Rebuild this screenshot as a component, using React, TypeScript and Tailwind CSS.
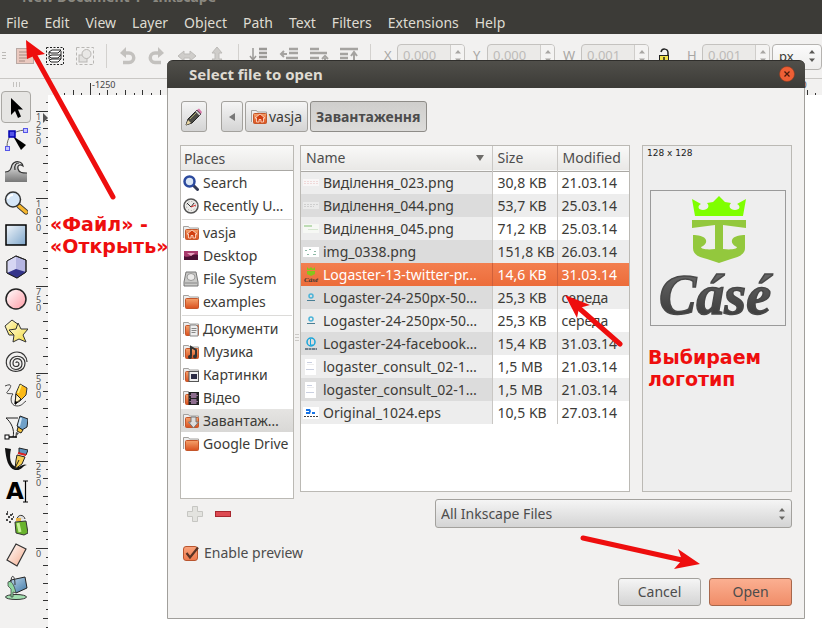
import React from "react";

const UI = "font-['Noto_Sans','Open_Sans',sans-serif]";

const menus = ["File", "Edit", "View", "Layer", "Object", "Path", "Text", "Filters", "Extensions", "Help"];

/* ---------- toolbar ---------- */

const barIcons: Record<string, React.ReactNode> = {
  selectAll: (
    <g>
      <rect x="1.500" y="2.500" width="17" height="15" fill="#eac9bf" stroke="#b9a9a4" />
      <path d="M4 6h9M4 9h11M4 12h9M4 15h6" stroke="#a58a82" />
    </g>
  ),
  layers: (
    <g fill="none" stroke="#222">
      <rect x="1.500" y="1.500" width="17" height="17" strokeDasharray="2 1.500" />
      <path d="M4 6l3-2h9l-3 3H6zM4 10l3-1h9l-3 3H6zM4 14l3-1h9l-3 3H6zM4 6v3M4 10v3M16 5v8" fill="#fff" />
    </g>
  ),
  deselect: (
    <g fill="none" stroke="#b9b7b4">
      <rect x="1.500" y="1.500" width="17" height="17" strokeDasharray="3 2" />
      <rect x="4" y="9" width="8" height="7" fill="#e2e1df" />
      <circle cx="11.500" cy="8" r="4.500" fill="#e9e8e6" />
    </g>
  ),
  undo: (
    <g>
      <path d="M7 7h5a4 4 0 0 1 0 9.500H6" fill="none" stroke="#c3c1be" strokeWidth="3.500" />
      <path d="M9 1v11L3 7z" fill="#c3c1be" />
    </g>
  ),
  redo: (
    <g>
      <path d="M13 7H8a4 4 0 0 0 0 9.500h6" fill="none" stroke="#c3c1be" strokeWidth="3.500" />
      <path d="M11 1v11l6-5z" fill="#c3c1be" />
    </g>
  ),
  flipH: <path d="M1 10l6-5v3h6V5l6 5-6 5v-3H7v3z" fill="#cfcdca" stroke="#bdbbb8" />,
  flipV: <path d="M10 1l5 6h-3v6h3l-5 6-5-6h3V7H5z" fill="#cfcdca" stroke="#bdbbb8" />,
  bottom: (
    <g fill="none" stroke="#9b9996" strokeWidth="1.500">
      <path d="M4 2v11M1 10l3 4 3-4" />
      <path d="M10 3h8M10 7h8M10 11h8M10 15h8" strokeWidth="2.500" />
    </g>
  ),
  lower: (
    <g fill="none" stroke="#a5a3a0" strokeWidth="2">
      <path d="M10 3h9M10 7h9M7 12h12M1 16h18" strokeWidth="2.500" />
      <path d="M8 8H2M5 5L2 8l3 3" />
    </g>
  ),
  raise: (
    <g fill="none" stroke="#a5a3a0" strokeWidth="2">
      <path d="M1 3h9M1 12h9M1 16h9" strokeWidth="2.500" />
      <path d="M1 7h17" strokeWidth="2.500" />
      <path d="M16 17v-5M13 13l3-3 3 3" />
    </g>
  ),
  top: (
    <g fill="none" stroke="#a5a3a0" strokeWidth="2">
      <path d="M1 3h18" strokeWidth="2.500" />
      <path d="M1 8h8M1 12h8M1 16h8" strokeWidth="2.500" />
      <path d="M15 17V7M12 10l3-4 3 4" />
    </g>
  ),
  lock: (
    <g stroke="#222">
      <rect x="5.500" y="9.500" width="9" height="8" fill="#f0e04a" />
      <path d="M7 6c1-4 7-4 7 1v3" fill="none" strokeWidth="1.500" />
      <path d="M10 11v4" strokeWidth="1.500" />
    </g>
  ),
};

function BarButton({ icon, label }: { icon: string; label: string }) {
  return (
    <button aria-label={label} className="flex h-7 w-[30px] shrink-0 items-center justify-center">
      <svg viewBox="0 0 20 20" className="size-5">{barIcons[icon]}</svg>
    </button>
  );
}

function BarDivider() {
  return (
    <div className="flex w-3 shrink-0 justify-center">
      <div className="h-6 w-px bg-[#d3d1ce]" />
    </div>
  );
}

function UpDown({ color }: { color: string }) {
  return (
    <svg viewBox="0 0 8 14" className="h-3.5 w-2" fill={color}>
      <path d="M1 4.500L4 1l3 3.500zM1 9.500L4 13l3-3.500z" />
    </svg>
  );
}

function Spin({ label, value, pad }: { label: string; value: string; pad: string }) {
  return (
    <label className="flex shrink-0 items-center text-[13px] text-[#a9a7a4]">
      <span className={pad}>{label}</span>
      <span className="flex h-6 w-[68px] overflow-hidden rounded-[4px] border border-[#c4c2bf] bg-[#ebeae8]">
        <input defaultValue={value} className="w-[52px] bg-transparent pl-[5px] text-[13px] text-[#bdbbb8] outline-none" />
        <span className="flex w-4 items-center justify-center border-l border-[#cfcdca] bg-[#f4f3f2]">
          <UpDown color="#a8a6a3" />
        </span>
      </span>
    </label>
  );
}

function Toolbar() {
  return (
    <div className="flex h-[45px] shrink-0 items-center overflow-hidden border-b border-[#c9c7c4] bg-[#f2f1f0]">
      <svg viewBox="0 0 10 20" className="h-5 w-2.5 shrink-0" stroke="#bbb9b6">
        <path d="M2 6.500h4M2 9.500h4M2 12.500h4" />
      </svg>
      <BarButton icon="selectAll" label="Select all" />
      <BarButton icon="layers" label="Select in all layers" />
      <BarButton icon="deselect" label="Deselect" />
      <BarDivider />
      <BarButton icon="undo" label="Rotate left" />
      <BarButton icon="redo" label="Rotate right" />
      <BarButton icon="flipH" label="Flip horizontal" />
      <BarButton icon="flipV" label="Flip vertical" />
      <BarDivider />
      <BarButton icon="bottom" label="Lower to bottom" />
      <BarButton icon="lower" label="Lower" />
      <BarButton icon="raise" label="Raise" />
      <BarButton icon="top" label="Raise to top" />
      <BarDivider />
      <Spin label="X" value="0.000" pad="w-[21px] pl-2" />
      <Spin label="Y" value="0.000" pad="w-[22px] pl-2" />
      <Spin label="W" value="0.001" pad="w-[26px] pl-2" />
      <BarButton icon="lock" label="Lock ratio" />
      <Spin label="H" value="0.001" pad="w-[23px] pl-2" />
      <div className="relative ml-0.5 h-[26px] w-[50px] shrink-0">
        <select aria-label="Units" className="size-full appearance-none rounded-[4px] border border-[#b5b3b0] bg-linear-to-b from-[#fbfbfb] to-[#eeedec] pl-1.5 text-[13px] text-[#3c3b37]">
          <option>px</option>
        </select>
        <span className="pointer-events-none absolute top-1.5 right-1.5">
          <UpDown color="#5a5956" />
        </span>
      </div>
    </div>
  );
}

/* ---------- toolbox ---------- */

const tools: [string, React.ReactNode][] = [
  ["Select", <path d="M7 3v17l4-4 3 7 3-1.500-3-7h5z" fill="#000" />],
  ["Edit nodes", (
    <g>
      <path d="M3 20C3 10 8 4 21 3" fill="none" stroke="#666" />
      <path d="M9 9l13 9-5 5z" fill="#000" />
      <rect x="5" y="4" width="6" height="6" fill="#5555e8" stroke="#0000b0" strokeWidth="1.500" />
      <rect x="19.500" y="1.500" width="4" height="4" fill="#c4c4ff" stroke="#5555e8" />
      <rect x="1.500" y="19.500" width="4" height="4" fill="#c4c4ff" stroke="#5555e8" />
    </g>
  )],
  ["Tweak", (
    <g>
      <path d="M1 23V13c5 0 6-3 7-7 3-5 10-4 11 1-3-2-6-1-5 3 1 4 5 4 9 4v9z" fill="url(#gGray)" />
      <path d="M1 13c5 0 6-3 7-7 3-5 10-4 11 1-3-2-6-1-5 3 1 4 5 4 9 4M11 11c-1-5 1-7 4-7" fill="none" stroke="#333" strokeWidth="1.200" />
    </g>
  )],
  ["Zoom", (
    <g>
      <path d="M15 15l7 6" stroke="#333" strokeWidth="5" strokeLinecap="round" />
      <path d="M15 15l7 6" stroke="#f5b62e" strokeWidth="3.500" strokeLinecap="round" />
      <circle cx="9" cy="8.500" r="7.500" fill="#d5e6f7" stroke="#333" strokeWidth="1.500" />
      <path d="M4 8a5 5 0 0 1 5-4" fill="none" stroke="#fff" strokeWidth="2" />
    </g>
  )],
  ["Rectangle", <rect x="2" y="2" width="20" height="20" fill="url(#gBlue)" stroke="#000" strokeWidth="1.500" />],
  ["3D box", (
    <g stroke="#222">
      <path d="M12 1l10 4v12l-9 6-10-5V6z" fill="#b6b6e2" />
      <path d="M12 1v13l-9 4V6z" fill="#d6d6f3" stroke="none" />
      <path d="M12 14l10 3-9 6-10-5z" fill="#34348a" stroke="none" />
      <path d="M12 1l10 4v12l-9 6-10-5V6z" fill="none" />
    </g>
  )],
  ["Ellipse", <circle cx="12" cy="12" r="10" fill="url(#gPink)" stroke="#222" strokeWidth="1.500" />],
  ["Star", (
    <g fill="url(#gYellow)" stroke="#333">
      <path d="M8 1l7 5-3 10H5L1 7z" />
      <path d="M14 4l3 6 7 0-5 6 3 7-7-3-6 3 1-7-5-5 7-1z" />
    </g>
  )],
  ["Spiral", <path d="M12 12c0-2 3-1 3 1 0 3-6 4-6-1 0-6 9-6 9 1 0 7-12 8-12-1C6 3 21 3 21 12c0 10-14 11-18 3C0 7 7 1 13 1c6 0 10 5 10 10" fill="none" stroke="#333" strokeWidth="1.200" />],
  ["Pencil", (
    <g>
      <path d="M1 3c7-3 7 0 3 5-4 4 3 2 5 3-3 3-3 12 4 12 5 0 6-3 9-5" fill="none" stroke="#444" />
      <path d="M16 1l7 4-1 7-6 6-5 3 1-11z" fill="#fbb917" stroke="#333" />
      <path d="M12 11l5 5-6 5z" fill="#fff3c4" stroke="#222" />
      <path d="M17 2l-3 8" stroke="#fff07a" strokeWidth="2" />
      <path d="M11 18l3 1-3 3z" />
    </g>
  )],
  ["Bezier", (
    <g>
      <path d="M2 3h12M2 3c5 4 9 12 7 19" fill="none" stroke="#222" />
      <path d="M16 1l8 3-1 8-5 3-5-4z" fill="#6fa0c8" stroke="#222" />
      <path d="M17 3l-2 8" stroke="#d3e6f5" strokeWidth="2" />
      <path d="M14 12l5 3-2 3-4-2z" fill="#f2c23c" stroke="#222" />
      <path d="M12 17l3 1-4 5z" fill="#555" />
      <path d="M4 22h9" stroke="#000" strokeWidth="1.500" />
      <rect x="1" y="20" width="4" height="4" fill="#fff" stroke="#000" />
    </g>
  )],
  ["Calligraphy", (
    <g>
      <path d="M1 1l6 1c-2 8-1 17 6 18 4 0 6-4 10-2-4 0-5 6-12 5C4 21 2 12 1 1z" fill="#111" />
      <path d="M15 1l9 2-2 5-7-2z" fill="#5e93bd" stroke="#222" />
      <path d="M14 6l8 2" stroke="#d22" strokeWidth="2" />
      <path d="M13 8l8 2-3 7-7 5 1-9z" fill="#f6cf52" stroke="#222" />
      <path d="M11 21l4-8" stroke="#222" />
    </g>
  )],
  ["Text", (
    <g>
      <path d="M21.500 2v21M19 2h5M19 23h5" stroke="#000" strokeWidth="1.200" />
      <text x="2" y="20" fontSize="23" fontWeight="700" fontFamily="DejaVu Sans, sans-serif">A</text>
    </g>
  )],
  ["Spray", (
    <g>
      <path d="M11 11l11-1 2 12-4 2-8-2z" fill="#69b32d" stroke="#333" />
      <path d="M14 12l2 9" stroke="#c8f29a" strokeWidth="3" />
      <path d="M13 9c0-6 7-6 8-1" fill="#ddd" stroke="#333" />
      <path d="M12 7h5v3h-5z" fill="#eab344" />
      <path d="M2 3h2M4 6h2M2 9h2M6 4h2M7 8h2M9 6h1M5 11h2M3 1h1M8 3h1" stroke="#111" strokeWidth="1.500" />
    </g>
  )],
  ["Eraser", <path d="M12 1l10 5-9 17-10-6z" fill="url(#gPeach)" stroke="#333" strokeWidth="1.200" />],
  ["Paint bucket", (
    <g>
      <ellipse cx="12" cy="22" rx="10.500" ry="2.500" fill="#a2dfb0" stroke="#333" />
      <path d="M7 5l14-3 2 11-11 5-8-10z" fill="url(#gSteel)" stroke="#222" />
      <path d="M4 7c3-2 6 2 8 11l-3-1v5H7v-8L4 11z" fill="#8fd6a0" stroke="#333" strokeWidth=".7" />
      <path d="M7 7C7-1 11-1 11 10" fill="none" stroke="#333" />
    </g>
  )],
];

function Gradients() {
  return (
    <defs>
      <linearGradient id="gGray" x2="0" y2="1"><stop stopColor="#eee" /><stop offset="1" stopColor="#777" /></linearGradient>
      <linearGradient id="gBlue" x2="1" y2="1"><stop stopColor="#f1f6fb" /><stop offset="1" stopColor="#7ea6cb" /></linearGradient>
      <linearGradient id="gSteel" x2="1" y2="1"><stop stopColor="#c5dcee" /><stop offset="1" stopColor="#3f78a6" /></linearGradient>
      <linearGradient id="gPink" x2="1" y2="1"><stop stopColor="#fff" /><stop offset="1" stopColor="#ff9ba5" /></linearGradient>
      <linearGradient id="gYellow" x2="1" y2="1"><stop stopColor="#fffde0" /><stop offset="1" stopColor="#f3d93c" /></linearGradient>
      <linearGradient id="gPeach" x2="1" y2="1"><stop stopColor="#fff" /><stop offset="1" stopColor="#f4ab8c" /></linearGradient>
      <linearGradient id="gOrange" x2="0" y2="1"><stop stopColor="#f5a26c" /><stop offset="1" stopColor="#d9501e" /></linearGradient>
      <linearGradient id="gInk" x2="0" y2="1"><stop stopColor="#6e6e6e" /><stop offset="1" stopColor="#333" /></linearGradient>
    </defs>
  );
}

function Toolbox() {
  return (
    <div className="flex w-9 shrink-0 flex-col overflow-hidden bg-[#f2f1f0] pl-px">
      <svg viewBox="0 0 28 12" className="h-3 w-7 shrink-0" stroke="#c4c2bf">
        <path d="M12.500 3v5M15.500 3v5M18.500 3v5" />
      </svg>
      {tools.map(([name, art], i) => (
        <button
          key={name}
          aria-label={name}
          className={
            "flex h-8 w-[30px] shrink-0 items-center justify-center " +
            (i === 0 ? "rounded-[4px] border border-[#aaa8a4] bg-[#e6e5e3]" : "")
          }
        >
          <svg viewBox="0 0 24 25" className="h-[25px] w-6">
            {i === 0 && <Gradients />}
            {art}
          </svg>
        </button>
      ))}
    </div>
  );
}

/* ---------- rulers ---------- */

const STEP = 87.4;
const marks = Array.from({ length: 110 }, (_, i) => i - 10);

function tickLength(i: number) {
  return i % 10 === 0 ? 12 : i % 2 === 0 ? 5 : 2;
}

function TopRuler() {
  const d = marks.map((i) => {
    const x = Math.round(54 + (i * STEP) / 10) + 0.5;
    return x < 12 ? "" : `M${x} 16v-${tickLength(i)}`;
  });
  return (
    <svg className="h-4 w-full shrink-0 bg-[#f2f1f0] font-['Noto_Sans']" fontSize="9" fill="#444">
      <path d={d.join("")} stroke="#333" />
      <text x="56" y="9">-1250</text>
      <text x={56 + 8 * STEP} y="9">750</text>
    </svg>
  );
}

function SideRuler() {
  const d = marks.map((i) => {
    const y = Math.round(16 + (i * STEP) / 10) + 0.5;
    return `M12 ${y}h-${tickLength(i)}`;
  });
  return (
    <svg className="h-full w-3 shrink-0 bg-[#f2f1f0] font-['Noto_Sans']" fontSize="9" fill="#555">
      <path d={d.join("")} stroke="#333" />
      {["1250", "1000", "750", "500", "250", "0"].map((n, i) =>
        n.split("").map((c, j) => (
          <text key={n + j} x="0" y={25 + i * STEP + j * 8}>{c}</text>
        )),
      )}
      <path d="M7 18l5 5-5 5z" fill="#555" />
    </svg>
  );
}

/* ---------- dialog ---------- */

function FolderBase() {
  return (
    <g>
      <path d="M.5 13V1.500h5l1 1.500h9v10" fill="#eee" stroke="#a3a19e" />
      <rect x="2.500" y="4.500" width="13" height="10" rx="1" fill="url(#gOrange)" stroke="#c4562a" />
    </g>
  );
}

const placeIcons: Record<string, React.ReactNode> = {
  search: (
    <g fill="none">
      <path d="M10 10l4.500 4.500" stroke="#333a55" strokeWidth="3" strokeLinecap="round" />
      <circle cx="6.500" cy="6.500" r="5" fill="#dbe7f5" stroke="#2c4a9e" strokeWidth="2.500" />
    </g>
  ),
  recent: (
    <g fill="none">
      <circle cx="8" cy="8" r="7" fill="#ecebe8" stroke="#555" strokeWidth="1.500" />
      <circle cx="8" cy="8" r="4.500" stroke="#999" strokeDasharray="1 2" />
      <path d="M4 5l4 4 3-4" stroke="#333" />
      <path d="M8 9l5-2" stroke="#d33" />
    </g>
  ),
  home: (
    <g>
      <FolderBase />
      <path d="M9 5l5 4h-1.500v4h-2.500v-2.500h-2V13H5.500V9H4z" fill="#d23f10" stroke="#ffe4d6" strokeWidth=".8" />
    </g>
  ),
  desktop: (
    <g>
      <rect x="1" y="3" width="14" height="9" fill="#4b1032" />
      <path d="M1 3h14v4c-6-2-9 4-14 1z" fill="#a83a6c" />
      <path d="M4 5h8l-4 3z" fill="#e9a6c0" />
    </g>
  ),
  disk: (
    <g>
      <path d="M3 1h10l2 10v4H1v-4z" fill="#c9c9c7" stroke="#777" />
      <ellipse cx="8" cy="6" rx="4" ry="3.500" fill="#ecebea" stroke="#999" />
      <path d="M2 12h12" stroke="#888" />
    </g>
  ),
  folder: <FolderBase />,
  docs: <g><FolderBase /><path d="M7 4h6l2 2v9H7z" fill="#eee" stroke="#888" /><path d="M8.500 7.500h5M8.500 9.500h5M8.500 11.500h4" stroke="#888" /></g>,
  music: <g><FolderBase /><path d="M8 12V3l5 3v6" fill="none" stroke="#333" strokeWidth="2" /><circle cx="7" cy="13" r="2" fill="#333" /><circle cx="12" cy="12.500" r="2" fill="#333" /></g>,
  pictures: <g><FolderBase /><rect x="6" y="4.500" width="9.500" height="10" fill="#eee" stroke="#555" /><rect x="8" y="7" width="6" height="5" fill="#2b2b44" /></g>,
  video: <g><FolderBase /><rect x="6" y="2.500" width="9.500" height="12" fill="#8d6d8e" stroke="#222" /><path d="M7 3v12M14.500 3v12" stroke="#222" strokeWidth="2" strokeDasharray="2 1" /><path d="M7 8.500h8" stroke="#222" /></g>,
  downloads: <g><FolderBase /><path d="M8 4h5v5h2.500L10.500 15 5.500 9H8z" fill="#ddd" stroke="#777" /></g>,
};

const places: ([string, string] | null)[] = [
  ["search", "Search"],
  ["recent", "Recently U…"],
  null,
  ["home", "vasja"],
  ["desktop", "Desktop"],
  ["disk", "File System"],
  ["folder", "examples"],
  null,
  ["docs", "Документи"],
  ["music", "Музика"],
  ["pictures", "Картинки"],
  ["video", "Відео"],
  ["downloads", "Завантаж…"],
  ["folder", "Google Drive"],
];

function Places() {
  return (
    <div className="h-[354px] border border-[#bbb9b4] bg-white">
      <div className="h-[25px] border-b border-[#aaa8a4] bg-linear-to-b from-[#f9f9f8] to-[#e9e8e6] px-[3px] leading-[26px] text-[#4c4c4c]">
        Places
      </div>
      <ul>
        {places.map((p, i) =>
          p === null ? (
            <li key={i} className="flex h-1 items-center px-px"><hr className="w-full border-[#dcdbd9]" /></li>
          ) : (
            <li key={i}>
              <button
                className={
                  "flex h-[23px] w-full items-center gap-1 pl-0.5 text-left whitespace-nowrap " +
                  (p[0] === "downloads" ? "bg-linear-to-b from-[#e5e4e2] to-[#d9d8d6]" : "")
                }
              >
                <svg viewBox="0 0 16 16" className="size-4 shrink-0">{placeIcons[p[0]]}</svg>
                {p[1]}
              </button>
            </li>
          ),
        )}
      </ul>
    </div>
  );
}

const files: [string, string, string, string][] = [
  ["red", "Виділення_023.png", "30,8 KB", "21.03.14"],
  ["gray", "Виділення_044.png", "53,7 KB", "25.03.14"],
  ["green", "Виділення_045.png", "71,2 KB", "25.03.14"],
  ["dots", "img_0338.png", "151,8 KB", "26.03.14"],
  ["case", "Logaster-13-twitter-pr…", "14,6 KB", "31.03.14"],
  ["blueS", "Logaster-24-250px-50…", "25,3 KB", "середа"],
  ["blueS", "Logaster-24-250px-50…", "25,3 KB", "середа"],
  ["blue", "Logaster-24-facebook…", "15,4 KB", "31.03.14"],
  ["doc", "logaster_consult_02-1…", "1,5 MB", "21.03.14"],
  ["doc", "logaster_consult_02-1…", "1,5 MB", "21.03.14"],
  ["eps", "Original_1024.eps", "10,5 KB", "27.03.14"],
];

const thumbs: Record<string, React.ReactNode> = {
  red: <g><rect y="4" width="16" height="7" fill="#f8f6f6" /><path d="M1 6.500h14M1 8.500h14" stroke="#f0dada" strokeDasharray="2 1" /></g>,
  gray: <g><rect y="4" width="16" height="7" fill="#eaeaea" /><path d="M1 6.500h14M1 8.500h10" stroke="#cfcfcf" strokeDasharray="2 1" /></g>,
  green: <g><rect y="3" width="16" height="9" fill="#f6f8f4" /><path d="M1 5h8" stroke="#bddcb4" strokeWidth="2" /><path d="M5 8.500h10" stroke="#d5e6cf" /></g>,
  dots: <g><rect y="3" width="16" height="10" fill="#fff" /><path d="M2 6.500h2M6 5.500h2M11 7.500h2M4 10.500h2M10 10.500h3" stroke="#8fb9a6" /></g>,
  case: (
    <g>
      <path d="M4 0l2 2 2-2 2 2 2-2v3H4zM4 4h8v3l-4 2-4-2z" fill="#86c41c" />
      <text x="1" y="15" fontSize="7" fontWeight="700" fontStyle="italic" fill="#333" fontFamily="Liberation Serif, serif">Cásé</text>
    </g>
  ),
  blueS: <g fill="none" stroke="#4bb3d8"><circle cx="8" cy="6" r="2" strokeWidth="1.500" /><path d="M4 10.500h8" stroke="#4a7f95" /></g>,
  blue: <g fill="none"><circle cx="8" cy="6" r="4" stroke="#18a5da" strokeWidth="1.500" /><path d="M7.500 3v6h3" stroke="#18a5da" /><path d="M2 13h12" stroke="#4a5f70" strokeWidth="1.500" strokeDasharray="3 .5" /></g>,
  doc: <g><rect x="2" width="11" height="16" fill="#fff" /><path d="M4 3.500h5M3 10.500h8" stroke="#c9cfe0" /><path d="M4 5.500h7" stroke="#eee" /></g>,
  eps: <g><rect y="2" width="16" height="12" fill="#fff" /><path d="M3 4h4l1 2-1 3H3V7h3V6H3zM9 7h3v2H9z" fill="#1673e6" /><path d="M1 11.500h14" stroke="#444" strokeDasharray="2 1" /></g>,
};

function FileTable() {
  return (
    <div className="min-w-0 flex-1 border border-[#bbb9b4] bg-white">
      <table className="w-full table-fixed border-collapse text-left">
        <thead>
          <tr className="h-[25px] border-b border-[#aaa8a4] bg-linear-to-b from-[#f9f9f8] to-[#e9e8e6] text-[#4c4c4c]">
            <th className="border-r border-[#c9c7c4] p-0 pl-[5px] font-normal">
              <div className="flex items-center justify-between pr-2">
                Name
                <svg viewBox="0 0 8 6" className="h-1.5 w-2"><path d="M0 0h8L4 6z" fill="#6e6d6a" /></svg>
              </div>
            </th>
            <th className="w-[65px] border-r border-[#c9c7c4] p-0 pl-[5px] font-normal">Size</th>
            <th className="w-[72px] p-0 pl-[5px] font-normal">Modified</th>
          </tr>
        </thead>
        <tbody>
          {files.map(([thumb, name, size, date], i) => {
            const on = i === 4;
            const row = on
              ? "bg-linear-to-b from-[#f37f4f] to-[#ec6c3a] text-white"
              : i % 2
                ? "bg-[#ededed]"
                : "bg-white";
            const lead = on ? "" : i % 2 ? "bg-[#dcdcdc]" : "bg-[#ededed]";
            const line = on ? "border-[#d0603a]" : "border-[#c9c7c4]";
            return (
              <tr key={i} className={"h-[23px] whitespace-nowrap " + row}>
                <td className={"border-r p-0 pl-0.5 " + line + " " + lead}>
                  <div className="flex items-center gap-1">
                    <svg viewBox="0 0 16 16" className="size-4 shrink-0">{thumbs[thumb]}</svg>
                    <span>{name}</span>
                  </div>
                </td>
                <td className={"border-r p-0 pl-[5px] " + line}>{size}</td>
                <td className="p-0 pl-1">{date}</td>
              </tr>
            );
          })}
        </tbody>
      </table>
    </div>
  );
}

function Preview() {
  return (
    <div className="w-[150px] shrink-0 border border-[#bbb9b4] bg-[#eeeeee] px-1">
      <div className="h-11 font-['DejaVu_Sans',sans-serif] text-[9px] leading-[14px] text-[#222]">128 x 128</div>
      <div className="ml-[3px] size-[136px] border border-[#9a9a9a]">
        <svg viewBox="0 0 134 134" className="size-full">
          <path d="M41 8l9 5c-4 2-3 6 2 6s7-4 4-7l6-1 6-6 6 6 6 1c-3 3-1 7 4 7s6-4 2-6l9-5-3 17H44z" fill="#7fff00" />
          <path d="M41 29h54v8l-23-3v24c8 1 14 0 14-2-2-1-6-3-5-7s9-5 13-5v13c0 7-7 9-14 11l-12 4-12-4c-8-2-14-4-14-11V44c4 0 12 1 13 5s-3 6-5 7c0 2 6 3 14 2V34l-23 3z" fill="#93c83d" />
          <text
            x="8"
            y="123"
            fontSize="56"
            fontWeight="700"
            fontStyle="italic"
            fill="url(#gInk)"
            stroke="#484848"
            strokeWidth="1.500"
            fontFamily="Liberation Serif, serif"
          >
            Cásé
          </text>
        </svg>
      </div>
    </div>
  );
}

const btn = "rounded-[3px] border border-[#a3a19d] bg-linear-to-b from-[#f5f5f5] to-[#d4d4d4]";

function Dialog() {
  return (
    <section className="absolute top-[60px] right-[17px] left-[167px] rounded-t-[6px] border border-[#a19f9b] bg-[#f2f1f0] text-[14px] leading-5 text-[#3c3b37]">
      <header className="-mx-px -mt-px flex h-7 items-center justify-between rounded-t-[6px] border-t border-[#2f2e2b] bg-linear-to-b from-[#504f4a] to-[#3c3b37] pr-2.5 pb-px pl-[22px]">
        <h1 className="text-[15px] font-bold text-[#dfdbd2]">Select file to open</h1>
        <button aria-label="Close">
          <svg viewBox="0 0 16 16" className="size-4">
            <circle cx="8" cy="8" r="7.500" fill="#ee5f35" stroke="#8e3a20" strokeWidth=".6" />
            <path d="M5.500 5.500l5 5M10.500 5.500l-5 5" stroke="#4a1b0c" strokeWidth="1.300" />
          </svg>
        </button>
      </header>

      <div className="px-3 pt-[13px] pb-3">
        <nav className="flex h-[31px] pl-px">
          <button aria-label="Type a file name" className={"mr-3.5 flex w-[26px] items-center justify-center " + btn}>
            <svg viewBox="0 0 18 18" className="size-[18px]">
              <path d="M1 17l2-6L12 2l4 4-9 9z" fill="#4c4c46" stroke="#222" />
              <path d="M12 2l2-1.500L17 4l-1 2z" fill="#d678a8" />
              <path d="M11 3l4 4" stroke="#ddd" strokeWidth="1.500" />
              <path d="M1 17l2-5 3 3z" fill="#e8d6a4" />
              <path d="M5 11l6-6" stroke="#a9a96c" />
            </svg>
          </button>
          <button aria-label="Back" className={"mr-0.5 flex w-[22px] items-center justify-center " + btn}>
            <svg viewBox="0 0 6 8" className="h-2 w-1.5"><path d="M6 0v8L0 4z" fill="#777" /></svg>
          </button>
          <button className={"mr-0.5 flex w-[63px] items-center justify-center gap-0.5 " + btn}>
            <svg viewBox="0 0 16 16" className="size-4">{placeIcons.home}</svg>
            vasja
          </button>
          <button className="rounded-[3px] border border-[#8e8c88] bg-linear-to-b from-[#cfcecc] to-[#dddcda] px-[5px] font-bold text-[#4c4c4c]">
            Завантаження
          </button>
        </nav>

        <div className="mt-[13px] flex">
          <div className="w-[114px] shrink-0">
            <Places />
            <div className="flex gap-3 pt-[7px] pl-[7px]">
              <button aria-label="Add bookmark">
                <svg viewBox="0 0 16 16" className="size-4"><path d="M5.500.5h5v5h5v5h-5v5h-5v-5h-5v-5h5z" fill="#e3e3df" stroke="#c6c6c2" /></svg>
              </button>
              <button aria-label="Remove bookmark">
                <svg viewBox="0 0 16 16" className="size-4"><rect x=".5" y="5.500" width="15" height="5" fill="#dd4a52" stroke="#a8272f" /></svg>
              </button>
            </div>
          </div>
          <svg viewBox="0 0 6 12" className="mt-[187px] h-3 w-1.5 shrink-0" stroke="#cbc9c6">
            <path d="M1 2.500h4M1 5.500h4M1 8.500h4" />
          </svg>
          <div className="min-w-0 flex-1">
            <div className="flex h-[347px] gap-3">
              <FileTable />
              <Preview />
            </div>
            <div className="relative mt-[7px] ml-[135px] h-[29px]">
              <select aria-label="File type" className={"size-full appearance-none pl-[5px] text-[#4c4c4c] " + btn}>
                <option>All Inkscape Files</option>
              </select>
              <span className="pointer-events-none absolute top-2 right-1.5"><UpDown color="#6a6966" /></span>
            </div>
          </div>
        </div>

        <label className="mt-[15px] flex w-fit items-center gap-1.5 pl-[3px] text-[#4c4c4c]">
          <span className="relative flex">
            <input type="checkbox" defaultChecked className="size-[15px] appearance-none rounded-[3px] border border-[#b9552e] bg-linear-to-b from-[#f9a27b] to-[#ef7a4c]" />
            <svg viewBox="0 0 16 16" className="pointer-events-none absolute inset-0 size-4">
              <path d="M3.500 7l3.500 4.500 8-10" fill="none" stroke="#5a3324" strokeWidth="2.200" />
            </svg>
          </span>
          Enable preview
        </label>

        <footer className="mt-[15px] flex justify-end gap-2">
          <button className={"h-7 w-[83px] text-[#4c4c4c] " + btn}>Cancel</button>
          <button className="h-7 w-[83px] rounded-[3px] border border-[#a8674b] bg-linear-to-b from-[#fbaf91] to-[#f08d68] text-[#4c4c4c]">Open</button>
        </footer>
      </div>
    </section>
  );
}

/* ---------- red call-outs ---------- */

function Arrows() {
  return (
    <svg className="pointer-events-none absolute inset-0 size-full" fill="#ee0e0e" stroke="#ee0e0e">
      <path d="M113 197L35 56M620 344L580 309M583 538L682 560" strokeWidth="5" strokeLinecap="round" />
      <path d="M26 40l1 19 7-3 11-2zM565 295l12 23 2-10 11-3zM700 564l-22-15 4 11-8 9z" stroke="none" />
    </svg>
  );
}

const note = "pointer-events-none absolute font-['DejaVu_Sans',sans-serif] text-[19px] leading-[22px] font-bold text-[#ee0e0e]";

export default function App() {
  return (
    <div className={"relative flex h-screen min-h-[628px] flex-col overflow-hidden bg-white " + UI}>
      <div className="flex h-[34px] shrink-0 flex-col justify-end overflow-hidden bg-[#3c3b37] text-[14px]">
        <div className="shrink-0 pl-[22px] leading-[18px] font-bold text-[#8a8880]">New Document 1 - Inkscape</div>
        <nav className="flex h-7 shrink-0 items-center gap-4 pt-[5px] pl-1.5 text-[#dfdbd2]">
          {menus.map((m) => (
            <button key={m}>{m}</button>
          ))}
        </nav>
      </div>
      <Toolbar />
      <div className="flex min-h-0 flex-1">
        <Toolbox />
        <div className="flex min-w-0 flex-1 flex-col">
          <TopRuler />
          <main className="flex min-h-0 flex-1">
            <SideRuler />
          </main>
        </div>
      </div>
      <Dialog />
      <p className={note + " top-[213px] left-[50px]"}>«Файл» -<br />«Открыть»</p>
      <p className={note + " top-[346px] left-[648px]"}>Выбираем<br />логотип</p>
      <Arrows />
    </div>
  );
}
